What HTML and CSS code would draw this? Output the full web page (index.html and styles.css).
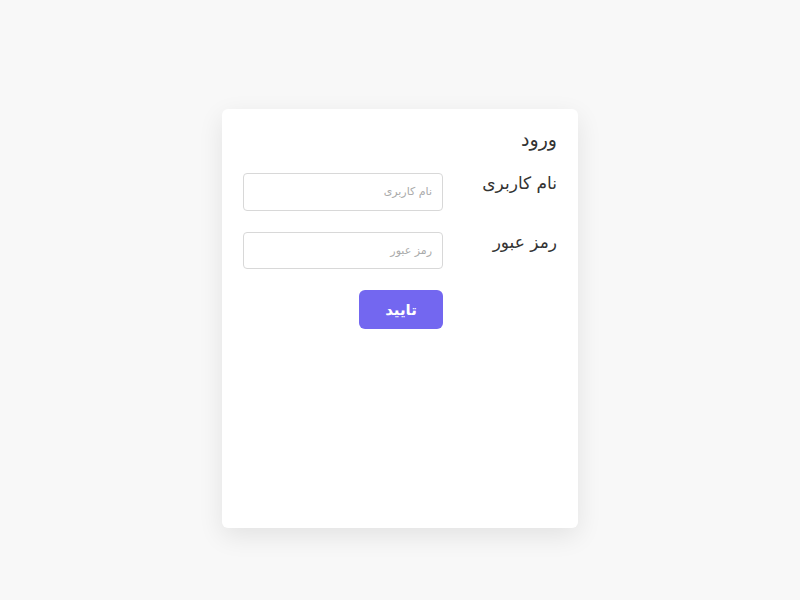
FILE: index.html
```html
<!DOCTYPE html>
<html lang="fa" dir="rtl">
<head>
<meta charset="utf-8">
<link rel="stylesheet" href="styles.css">
</head>
<body>
<main class="page">
  <form class="card">
    <h1 class="title">ورود</h1>
    <div class="grid">
      <label class="label" for="u">نام کاربری</label>
      <input class="field" id="u" type="text" placeholder="نام کاربری">
      <label class="label" for="p">رمز عبور</label>
      <input class="field" id="p" type="password" placeholder="رمز عبور">
      <span></span>
      <button class="btn" type="button">تایید</button>
    </div>
  </form>
</main>
</body>
</html>
```
FILE: styles.css
```css
* { box-sizing: border-box; }
html, body { margin: 0; height: 100%; }
body {
  background: #f8f8f8;
  font-family: "DejaVu Sans", sans-serif;
  color: #333;
}
.page {
  height: 100%;
  display: flex;
  justify-content: center;
  padding-top: 109px;
}
.card {
  width: 356px;
  height: 419px;
  background: #fff;
  border-radius: 6px;
  box-shadow: 0 8px 26px rgba(0,0,0,0.09);
  padding: 18px 21px 20px;
}
.title {
  margin: 0 0 22px;
  font-size: 19px;
  font-weight: normal;
  line-height: 24px;
  color: #333;
}
.grid {
  display: grid;
  grid-template-columns: 114px 200px;
  row-gap: 21px;
  align-items: start;
}
.label {
  font-size: 17px;
  line-height: 20px;
  color: #333;
}
.field {
  width: 200px;
  height: 37.5px;
  border: 1px solid #d8d8d8;
  border-radius: 4px;
  padding: 0 10px;
  font-family: "DejaVu Sans", sans-serif;
  font-size: 11px;
  background: #fff;
  outline: none;
}
.field::placeholder { color: #aaa; }
.btn {
  justify-self: start;
  width: 84px;
  height: 39px;
  border: none;
  border-radius: 6px;
  background: #7367f0;
  color: #fff;
  font-family: "DejaVu Sans", sans-serif;
  font-weight: bold;
  font-size: 15px;
  cursor: pointer;
}
```
